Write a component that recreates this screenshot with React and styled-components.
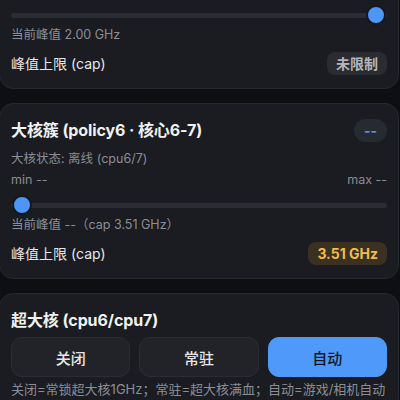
import React from "react"
import styled, { createGlobalStyle } from "styled-components"

const Global = createGlobalStyle`
  html, body {
    margin: 0;
    padding: 0;
    background: #0e0f12;
    overflow: hidden;
  }
  body {
    font-family: "Inter", "Noto Sans CJK SC", sans-serif;
    color: #e8e9ec;
  }
`

const Page = styled.div`
  width: 400px;
  display: flex;
  flex-direction: column;
  gap: 14px;
  margin-top: -20px;
`

const Card = styled.section`
  margin-left: -1px;
  width: 400px;
  box-sizing: border-box;
  background: #1a1c21;
  border: 1px solid #25282e;
  border-radius: 14px;
  padding: ${(p) => (p.$cut ? 24 : 14)}px 11px 13px;
  flex-shrink: 0;
`

const HeadRow = styled.div`
  display: flex;
  align-items: center;
  justify-content: space-between;
  height: 24px;
`

const Title = styled.h3`
  margin: 0;
  font-size: 16px;
  font-weight: 700;
  line-height: 24px;
  letter-spacing: -0.1px;
  color: #f0f1f3;
`

const Muted = styled.div`
  font-size: ${(p) => p.$size || 12.5}px;
  line-height: 18px;
  color: #8b8e96;
  margin-top: ${(p) => p.$gap || 0}px;
`

const Between = styled.div`
  display: flex;
  justify-content: space-between;
  font-size: 12.5px;
  line-height: 18px;
  color: #8b8e96;
  margin-top: 3px;
`

const Track = styled.div`
  position: relative;
  height: 20px;
  margin-top: 6px;
  display: flex;
  align-items: center;
  &::before {
    content: "";
    flex: 1;
    height: 5px;
    border-radius: 3px;
    background: #2a2d34;
  }
`

const Thumb = styled.span`
  position: absolute;
  top: 0;
  box-sizing: border-box;
  width: 20px;
  height: 20px;
  border-radius: 50%;
  background: #4d96f8;
  border: 2px solid #15171b;
`

const CapRow = styled.div`
  display: flex;
  align-items: center;
  justify-content: space-between;
  height: 24px;
  margin-top: 7px;
  font-size: 14px;
  color: #e6e7ea;
`

const tones = {
  gray: { bg: "#2a2c32", fg: "#b4b6bc" },
  gold: { bg: "#3a3123", fg: "#f0bd50" },
  blue: { bg: "#262a31", fg: "#5b8ee0" },
}

const Badge = styled.span`
  display: inline-flex;
  align-items: center;
  justify-content: center;
  height: 23px;
  min-width: 32px;
  padding: 0 ${(p) => (p.$pill ? 10 : 9)}px;
  box-sizing: border-box;
  border-radius: ${(p) => (p.$pill ? 12 : 8)}px;
  font-size: 14px;
  font-weight: 700;
  background: ${(p) => tones[p.$tone].bg};
  color: ${(p) => tones[p.$tone].fg};
`

const Buttons = styled.div`
  display: grid;
  grid-template-columns: repeat(3, 1fr);
  gap: 9px;
  margin-top: 5px;
`

const ModeButton = styled.button`
  height: 40px;
  border-radius: 11px;
  font-family: inherit;
  font-size: 15px;
  font-weight: 500;
  border: 1px solid ${(p) => (p.$active ? "#4f99fa" : "#2a2d34")};
  background: ${(p) => (p.$active ? "#4f99fa" : "#212328")};
  color: ${(p) => (p.$active ? "#0d1726" : "#e6e7ea")};
`

const Slider = ({ pos, first }) => (
  <Track style={first ? { marginTop: 0 } : undefined}>
    <Thumb style={{ left: pos === "max" ? "calc(100% - 21px)" : "1px" }} />
  </Track>
)

const Cluster = ({ title, badge, status, peak, cap, capTone, pos }) => (
  <Card $cut={!title}>
    {title && (
      <>
        <HeadRow>
          <Title>{title}</Title>
          <Badge $tone="blue" $pill>{badge}</Badge>
        </HeadRow>
        <Muted $gap={8}>{status}</Muted>
        <Between>
          <span>min --</span>
          <span>max --</span>
        </Between>
      </>
    )}
    <Slider pos={pos} first={!title} />
    <Muted $gap={1}>{peak}</Muted>
    <CapRow>
      <span>峰值上限 (cap)</span>
      <Badge $tone={capTone}>{cap}</Badge>
    </CapRow>
  </Card>
)

export default function App() {
  const modes = ["关闭", "常驻", "自动"]
  const active = "自动"
  return (
    <>
      <Global />
      <Page>
        <Cluster
          peak="当前峰值 2.00 GHz"
          cap="未限制"
          capTone="gray"
          pos="max"
        />
        <Cluster
          title="大核簇 (policy6 · 核心6-7)"
          badge="--"
          status="大核状态: 离线 (cpu6/7)"
          peak="当前峰值 --（cap 3.51 GHz）"
          cap="3.51 GHz"
          capTone="gold"
          pos="min"
        />
        <Card>
          <Title>超大核 (cpu6/cpu7)</Title>
          <Buttons>
            {modes.map((m) => (
              <ModeButton key={m} $active={m === active}>{m}</ModeButton>
            ))}
          </Buttons>
          <Muted $gap={3} $size={13}>关闭=常锁超大核1GHz；常驻=超大核满血；自动=游戏/相机自动</Muted>
        </Card>
      </Page>
    </>
  )
}
